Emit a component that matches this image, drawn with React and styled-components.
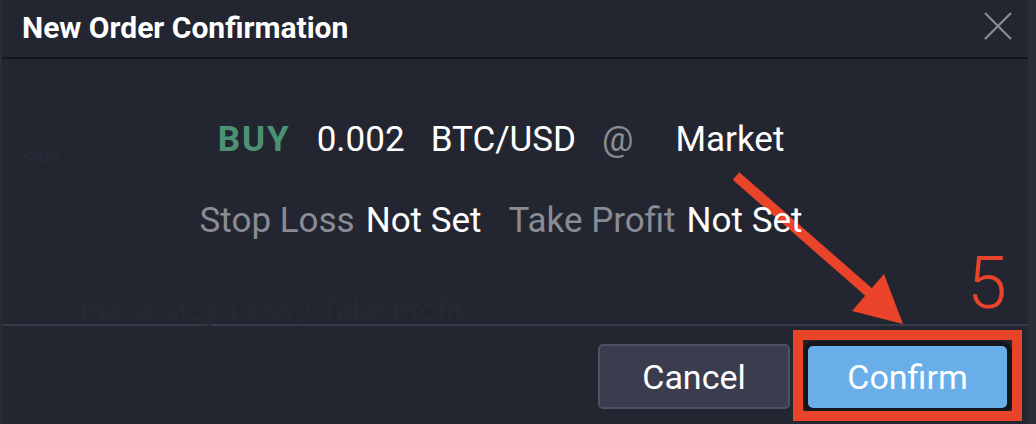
import React from "react";
import styled, { createGlobalStyle } from "styled-components";

const GlobalStyle = createGlobalStyle`
  html, body {
    margin: 0;
    padding: 0;
    background: #2a2c37;
  }
  * {
    box-sizing: border-box;
  }
`;

const Page = styled.div`
  position: relative;
  width: 1036px;
  height: 424px;
  overflow: hidden;
  padding: 0 8px 0 2px;
  font-family: Roboto, "Liberation Sans", sans-serif;
`;

const Modal = styled.div`
  display: flex;
  flex-direction: column;
  height: 440px;
  background: #232631;
`;

const Header = styled.div`
  display: flex;
  justify-content: space-between;
  align-items: flex-start;
  height: 59px;
  padding: 0 16px 0 20px;
  border-bottom: 2px solid #14161c;
`;

const Title = styled.h1`
  margin: 11px 0 0;
  font-size: 30px;
  font-weight: 700;
  line-height: 34px;
  color: #ffffff;
`;

const CloseButton = styled.button`
  display: flex;
  margin-top: 12px;
  padding: 0;
  border: 0;
  background: transparent;
  cursor: pointer;
`;

const Body = styled.div`
  position: relative;
  display: flex;
  flex-direction: column;
  align-items: center;
  gap: 41px;
  height: 265px;
  padding: 61px 28px 0 0;
`;

const Ghost = styled.div`
  position: absolute;
  inset: 0;
  z-index: 0;
  color: #272a35;
`;

const GhostLabel = styled.span`
  position: absolute;
  left: 18px;
  top: 86px;
  font-size: 21px;
`;

const GhostBox = styled.div`
  position: absolute;
  left: 16px;
  top: 123px;
  width: 136px;
  height: 60px;
  border: 1px solid #252834;
`;

const GhostLink = styled.span`
  position: absolute;
  left: 77px;
  top: 233px;
  font-size: 30px;
  color: #262934;
`;

const Row = styled.div`
  position: relative;
  z-index: 1;
  display: flex;
  align-items: baseline;
  gap: ${(p) => p.$gap}px;
  font-size: 35px;
  line-height: 40px;
  white-space: nowrap;
`;

const Side = styled.span`
  font-weight: 700;
  letter-spacing: 2px;
  color: #4c9272;
`;

const Value = styled.span`
  color: #ffffff;
  margin-left: ${(p) => p.$ml || 0}px;
`;

const Label = styled.span`
  color: #8a8c94;
  margin-left: ${(p) => p.$ml || 0}px;
`;

const Footer = styled.div`
  display: flex;
  justify-content: flex-end;
  align-items: center;
  gap: 18px;
  padding: 18px 21px 0 0;
  border-top: 2px solid #363946;
`;

const Button = styled.button`
  position: relative;
  height: ${(p) => (p.$primary ? 62 : 65)}px;
  width: ${(p) => (p.$primary ? 199 : 192)}px;
  border-radius: 5px;
  border: ${(p) => (p.$primary ? "0" : "2px solid #4a5366")};
  background: ${(p) => (p.$primary ? "#6aaee9" : "#3b3d4f")};
  color: #ffffff;
  font-family: Roboto, "Liberation Sans", sans-serif;
  font-size: 34px;
  cursor: pointer;
  box-shadow: ${(p) => (p.$primary ? "0 0 0 5px #15161c" : "none")};
`;

const Highlight = styled.span`
  position: absolute;
  top: -16px;
  left: -15px;
  right: -15px;
  bottom: -13px;
  border: 10px solid #e9432a;
  pointer-events: none;
`;

const StepNumber = styled.span`
  position: absolute;
  left: 967px;
  top: 242px;
  font-family: Roboto, "DejaVu Sans", sans-serif;
  font-size: 72px;
  font-weight: 300;
  line-height: 84px;
  color: #e9432a;
`;

const ArrowLayer = styled.svg`
  position: absolute;
  left: 0;
  top: 0;
  pointer-events: none;
`;

function CloseIcon() {
  return (
    <svg width="28" height="28" viewBox="0 0 28 28">
      <path d="M1 1 L27 27 M27 1 L1 27" stroke="#8a8c93" strokeWidth="2.2" fill="none" />
    </svg>
  );
}

function App() {
  return (
    <>
      <GlobalStyle />
      <Page>
        <Modal>
          <Header>
            <Title>New Order Confirmation</Title>
            <CloseButton aria-label="Close">
              <CloseIcon />
            </CloseButton>
          </Header>
          <Body>
            <Ghost>
              <GhostLabel>Side</GhostLabel>
              <GhostBox />
              <GhostLink>Place Stop Loss / Take Profit</GhostLink>
            </Ghost>
            <Row $gap={26}>
              <Side>BUY</Side>
              <Value>0.002</Value>
              <Value>BTC/USD</Value>
              <Label>@</Label>
              <Value $ml={16}>Market</Value>
            </Row>
            <Row $gap={11}>
              <Label>Stop Loss</Label>
              <Value>Not Set</Value>
              <Label $ml={16}>Take Profit</Label>
              <Value>Not Set</Value>
            </Row>
          </Body>
          <Footer>
            <Button>Cancel</Button>
            <Button $primary>
              Confirm
              <Highlight />
            </Button>
          </Footer>
        </Modal>
        <StepNumber>5</StepNumber>
        <ArrowLayer width="1036" height="424" viewBox="0 0 1036 424">
          <line x1="736" y1="176" x2="872" y2="295" stroke="#e9432a" strokeWidth="10" />
          <polygon points="903,324 884,274 852,311" fill="#e9432a" />
        </ArrowLayer>
      </Page>
    </>
  );
}

export default App;
